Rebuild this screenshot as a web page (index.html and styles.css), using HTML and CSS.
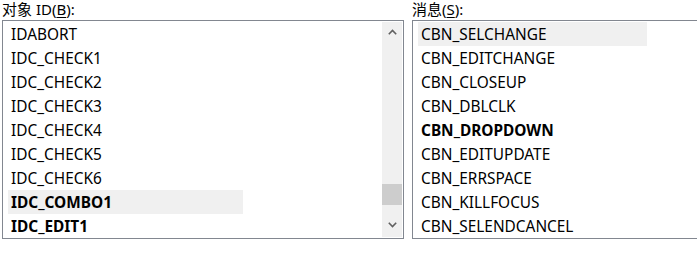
FILE: index.html
```html
<!DOCTYPE html>
<html lang="zh-CN">
<head>
    <meta charset="UTF-8">
    <title>消息映射</title>
    <link rel="stylesheet" href="styles.css">
</head>
<body>
    <div class="panes">
        <div class="pane pane-objects">
            <div class="label">对象 ID(<u>B</u>):</div>
            <div class="listbox">
                <ul class="items">
                    <li>IDABORT</li>
                    <li>IDC_CHECK1</li>
                    <li>IDC_CHECK2</li>
                    <li>IDC_CHECK3</li>
                    <li>IDC_CHECK4</li>
                    <li>IDC_CHECK5</li>
                    <li>IDC_CHECK6</li>
                    <li class="hot bold">IDC_COMBO1</li>
                    <li class="bold">IDC_EDIT1</li>
                </ul>
                <div class="scrollbar">
                    <div class="arrow">
                        <svg width="9" height="6" viewBox="0 0 9 6"><polyline points="0.8,5.2 4.5,1.5 8.2,5.2" /></svg>
                    </div>
                    <div class="track"><div class="thumb"></div></div>
                    <div class="arrow arrow-down">
                        <svg width="9" height="6" viewBox="0 0 9 6"><polyline points="0.8,0.8 4.5,4.5 8.2,0.8" /></svg>
                    </div>
                </div>
            </div>
        </div>
        <div class="pane pane-messages">
            <div class="label">消息(<u>S</u>):</div>
            <div class="listbox listbox-open">
                <ul class="items">
                    <li class="hot">CBN_SELCHANGE</li>
                    <li>CBN_EDITCHANGE</li>
                    <li>CBN_CLOSEUP</li>
                    <li>CBN_DBLCLK</li>
                    <li class="bold">CBN_DROPDOWN</li>
                    <li>CBN_EDITUPDATE</li>
                    <li>CBN_ERRSPACE</li>
                    <li>CBN_KILLFOCUS</li>
                    <li>CBN_SELENDCANCEL</li>
                </ul>
            </div>
        </div>
    </div>
</body>
</html>
```

FILE: styles.css
```css
body {
    margin: 0;
    padding: 0 0 0 2px;
    background-color: #fff;
    color: #000;
    font-family: "Noto Sans", "Noto Sans CJK SC", sans-serif;
    font-size: 15px;
    overflow: hidden;
}
.panes {
    display: flex;
    gap: 8px;
}
.pane-objects {
    width: 402px;
    flex: none;
}
.pane-messages {
    flex: 1;
    min-width: 0;
}
.label {
    height: 20px;
    line-height: 18px;
    white-space: nowrap;
}
.label u {
    text-underline-offset: 2px;
}
.listbox {
    display: flex;
    height: 219px;
    box-sizing: border-box;
    border: 1px solid #828790;
    overflow: hidden;
}
/* the messages list runs on past the right edge of the dialog */
.listbox-open {
    border-right: none;
}
.items {
    flex: 1;
    list-style: none;
    margin: 0;
    padding: 1px 0 0 5px;
    font-size: 15.4px;
}
.items li {
    height: 24px;
    box-sizing: border-box;
    padding: 2px 0 0 3px;
    line-height: 22px;
    white-space: nowrap;
}
.items .hot {
    background-color: #f0f0f0;
}
.pane-objects .hot {
    width: 235px;
}
.pane-messages .hot {
    width: 229px;
}
.items .bold {
    font-weight: bold;
}
.scrollbar {
    display: flex;
    flex-direction: column;
    width: 20px;
    margin: 1px 1px 1px 0;
    background-color: #f0f0f0;
}
.arrow {
    height: 20px;
    display: flex;
    align-items: center;
    justify-content: center;
}
.arrow-down {
    align-items: flex-start;
    padding-top: 5px;
    box-sizing: border-box;
}
.arrow svg polyline {
    fill: none;
    stroke: #606060;
    stroke-width: 1.6;
}
.track {
    flex: 1;
}
.thumb {
    height: 21px;
    margin-top: 142px;
    background-color: #cdcdcd;
}
```
